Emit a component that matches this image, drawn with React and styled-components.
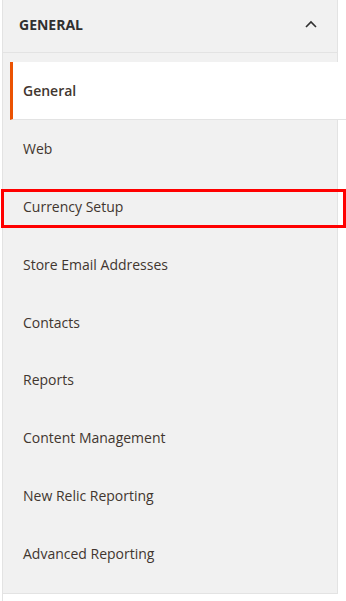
import React, { useState } from 'react';
import styled, { createGlobalStyle } from 'styled-components';

const GlobalStyle = createGlobalStyle`
    body {
        margin: 0;
        background: #ffffff;
        font-family: 'Open Sans', 'Liberation Sans', sans-serif;
    }
`;

const items = [
    'General',
    'Web',
    'Currency Setup',
    'Store Email Addresses',
    'Contacts',
    'Reports',
    'Content Management',
    'New Relic Reporting',
    'Advanced Reporting',
];

const App = () => {
    const [current, setCurrent] = useState('General');
    const [open, setOpen] = useState(true);

    return (
        <>
            <GlobalStyle />
            <Wrapper>
                <Section>
                    <Title onClick={() => setOpen(!open)}>
                        <span>General</span>
                        <svg width="12" height="8" viewBox="0 0 12 8">
                            <path d="M1 7 L6 2 L11 7" fill="none" stroke="#303030" strokeWidth="1.6" />
                        </svg>
                    </Title>
                    {open && (
                        <NavList>
                            {items.map(item => (
                                <NavItem key={item} active={item === current} onClick={() => setCurrent(item)}>
                                    {item}
                                </NavItem>
                            ))}
                        </NavList>
                    )}
                </Section>
                <NextSection />
                <Highlight />
            </Wrapper>
        </>
    );
};

const Wrapper = styled.div`
    position: relative;
    width: 346px;
    height: 601px;
    overflow: hidden;
    padding-left: 2px;
    box-sizing: border-box;
`;

const Section = styled.div`
    width: 336px;
    background: #f1f1f1;
    border-left: 1px solid #e3e3e3;
    border-right: 1px solid #e3e3e3;
    border-bottom: 1px solid #e3e3e3;
    box-sizing: border-box;
`;

const Title = styled.div`
    height: 53px;
    box-sizing: border-box;
    border-bottom: 1px solid #e3e3e3;
    display: flex;
    align-items: center;
    justify-content: space-between;
    padding: 0 20px 4px 16px;
    font-size: 14px;
    font-weight: 700;
    text-transform: uppercase;
    color: #303030;
    cursor: pointer;
`;

const NavList = styled.ul`
    list-style: none;
    margin: 0;
    padding: 9px 0 11px;
`;

const NavItem = styled.li`
    height: ${p => (p.active ? '58px' : '57.75px')};
    box-sizing: border-box;
    display: flex;
    align-items: center;
    font-size: 14px;
    color: #41362f;
    cursor: pointer;
    padding-left: ${p => (p.active ? '10px' : '20px')};
    margin-left: ${p => (p.active ? '7px' : '0')};
    margin-right: ${p => (p.active ? '-10px' : '0')};
    background: ${p => (p.active ? '#ffffff' : 'transparent')};
    border-left: ${p => (p.active ? '3px solid #eb5202' : 'none')};
    border-bottom: ${p => (p.active ? '1px solid #e3e3e3' : 'none')};
    font-weight: ${p => (p.active ? 600 : 400)};
`;

const NextSection = styled.div`
    width: 336px;
    height: 20px;
    border-left: 1px solid #e3e3e3;
    box-sizing: border-box;
`;

const Highlight = styled.div`
    position: absolute;
    left: 1px;
    top: 189px;
    width: 345px;
    height: 39px;
    border: 3px solid #ff0000;
    box-sizing: border-box;
    pointer-events: none;
`;

export default App;
